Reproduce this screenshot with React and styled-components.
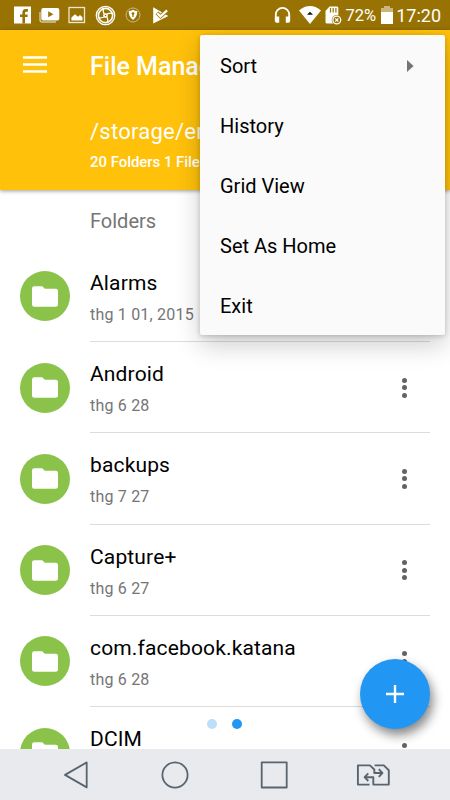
import React from "react";
import styled, { createGlobalStyle } from "styled-components";

const Global = createGlobalStyle`
  *, *::before, *::after { box-sizing: border-box; }
  body { margin: 0; font-family: Roboto, "Liberation Sans", sans-serif; background: #fff; }
  svg { display: block; flex: none; }
`;

const Screen = styled.div`
  position: relative;
  display: flex;
  flex-direction: column;
  width: 450px;
  height: 800px;
  overflow: hidden;
  background: #fff;
`;

const StatusBar = styled.div`
  display: flex;
  justify-content: space-between;
  height: 30px;
  padding: 0 9px 0 13px;
  flex: none;
  background: #987304;
  color: #fff;
`;

const StatusGroup = styled.div`
  display: flex;
  align-items: center;
  gap: ${(p) => p.$gap || 0}px;
`;

const StatusText = styled.span`
  font-size: ${(p) => p.$size}px;
  line-height: 30px;
  height: 30px;
  padding-top: 0.5px;
  margin: 0 ${(p) => p.$right || 0}px 0 ${(p) => p.$left}px;
`;

const Header = styled.header`
  position: relative;
  z-index: 1;
  display: flex;
  height: 160px;
  flex: none;
  padding: 25px 0 0 23px;
  background: #ffc10a;
  color: #fff;
  box-shadow: 0 1px 4px rgba(0, 0, 0, 0.4);
`;

const HeaderText = styled.div`
  display: flex;
  flex-direction: column;
  margin-left: 43px;
  white-space: nowrap;
`;

const AppTitle = styled.h1`
  margin: -3px 0 0;
  font-size: 25px;
  line-height: 30px;
  font-weight: 500;
`;

const Path = styled.div`
  margin-top: 36px;
  font-size: 22px;
  line-height: 28px;
  letter-spacing: 0.25px;
`;

const Counts = styled.div`
  margin-top: 6px;
  font-size: 15px;
  line-height: 20px;
  font-weight: 500;
  letter-spacing: -0.05px;
`;

const Content = styled.main`
  flex: 1;
  min-height: 0;
  overflow: hidden;
`;

const SectionTitle = styled.h2`
  margin: 0;
  height: 60.75px;
  padding: 18.5px 0 0 90px;
  font-size: 20px;
  line-height: 24px;
  font-weight: 400;
  color: #757575;
`;

const Row = styled.div`
  display: flex;
  height: 91.25px;
  padding-left: 20px;
`;

const Avatar = styled.div`
  display: flex;
  align-items: center;
  justify-content: center;
  width: 50px;
  height: 50px;
  margin-top: 20.5px;
  flex: none;
  border-radius: 50%;
  background: #8bc34a;
`;

const RowBody = styled.div`
  display: flex;
  justify-content: space-between;
  width: 340px;
  margin-left: 20px;
  border-bottom: 1px solid #dcdcdc;
`;

const FileName = styled.div`
  margin-top: 20px;
  font-size: 21px;
  line-height: 24px;
  letter-spacing: 0.15px;
  color: #000;
`;

const FileDate = styled.div`
  margin-top: 10px;
  font-size: 16px;
  line-height: 20px;
  letter-spacing: 0.2px;
  color: #757575;
`;

const MoreDots = styled.div`
  display: flex;
  flex-direction: column;
  gap: 2.5px;
  margin: 35.5px 22.7px 0 0;
`;

const Dot = styled.span`
  width: 5px;
  height: 5px;
  border-radius: 50%;
  background: #636363;
`;

const Menu = styled.div`
  position: absolute;
  z-index: 3;
  top: 35px;
  left: 200px;
  width: 245px;
  height: 300px;
  border-radius: 2px;
  background: #fafafa;
  box-shadow: 0 10px 26px rgba(0, 0, 0, 0.2), 0 1px 5px rgba(0, 0, 0, 0.2);
`;

const MenuItem = styled.div`
  display: flex;
  align-items: center;
  justify-content: space-between;
  height: 60px;
  padding: 1px 31px 0 20px;
  font-size: 20px;
  color: #000;
`;

const Pager = styled.div`
  position: absolute;
  z-index: 2;
  top: 719.3px;
  left: 207.4px;
  display: flex;
  gap: 15px;
`;

const PageDot = styled.span`
  width: 10px;
  height: 10px;
  border-radius: 50%;
  background: ${(p) => (p.$active ? "#2196f3" : "#bbdefb")};
`;

const Fab = styled.button`
  position: absolute;
  z-index: 2;
  top: 659.3px;
  left: 360px;
  display: flex;
  align-items: center;
  justify-content: center;
  width: 70px;
  height: 70px;
  padding: 0;
  border: 0;
  border-radius: 50%;
  background: #2196f3;
  box-shadow: 3px 6px 11px rgba(0, 0, 0, 0.48);
`;

const NavBar = styled.nav`
  position: relative;
  display: flex;
  align-items: center;
  height: 51px;
  flex: none;
  padding: 1px 0 0 62px;
  background: #e9eaed;
  color: #58656f;

  svg + svg { margin-left: 70px; }
  svg:last-child { margin-left: 67.5px; }
`;

const FacebookIcon = () => (
  <svg width="18" height="18" viewBox="0 0 18 18">
    <rect x="1" y="0.5" width="17" height="17" fill="#fff" />
    <path d="M12 17.5V11h2.6V8.5H12V7q0-1.3 1.4-1.3h1.5V3h-2.2Q9.4 3 9.4 6.5v2H7V11h2.4v6.5Z" fill="#987304" />
  </svg>
);

const VideoIcon = () => (
  <svg width="21" height="16" viewBox="0 0 21 16">
    <path d="M1 5v7.5Q1 15 3.5 15H17" fill="none" stroke="#d7c69b" strokeWidth="1.4" />
    <rect x="2.3" y="1" width="18" height="12.5" rx="2" fill="#fff" />
    <path d="m9.2 4.2 5.2 3-5.2 3Z" fill="#987304" />
  </svg>
);

const GalleryIcon = () => (
  <svg width="18" height="18" viewBox="0 0 18 18">
    <rect x="1" y="1.5" width="15.5" height="15" fill="none" stroke="#eee6d0" strokeWidth="1.3" />
    <path d="M3.4 14.4v-3L7 8.3l3 2.4L12 9l2.5 2.3v3.1Z" fill="#fff" />
  </svg>
);

const WheelIcon = () => (
  <svg width="23" height="21" viewBox="-1 0 23 21" fill="none" stroke="#fff">
    <circle cx="10.5" cy="10.5" r="9.2" strokeWidth="1.3" />
    <circle cx="10.5" cy="10.5" r="7.1" strokeWidth="1.6" />
    <path d="M10.5 10.5Q8 9 8.2 4M10.5 10.5Q12 8 17 8.2M10.5 10.5Q13 12 12.8 17M10.5 10.5Q9 13 4 12.8" strokeWidth="1.3" />
    <circle cx="10.5" cy="10.5" r="2.3" fill="#fff" stroke="none" />
    <circle cx="10.5" cy="10.5" r=".8" fill="#987304" stroke="none" />
  </svg>
);

const ShieldIcon = () => (
  <svg width="16" height="16" viewBox="0 0 16 16">
    <circle cx="8" cy="8" r="7" fill="none" stroke="#cbb781" strokeWidth="1" />
    <path d="M8 2.8q2 1.2 4.3 1.3 0 6-4.3 9-4.3-3-4.3-9Q6 4 8 2.8Z" fill="#fff" />
    <circle cx="8" cy="6.6" r="1.4" fill="#987304" />
    <path d="M8 7v3" stroke="#987304" strokeWidth="1.3" />
  </svg>
);

const PlayCheckIcon = () => (
  <svg width="20" height="17" viewBox="-4 0 20 17">
    <path d="M.2.2 15.3 9 .2 16.6Z" fill="#fff" />
    <path d="m4 5.8 3.5 3.5L14.6 3" fill="none" stroke="#987304" strokeWidth="4" />
    <path d="m4.2 6.2 3.3 3.2 6.6-6" fill="none" stroke="#fff" strokeWidth="2.2" />
  </svg>
);

const HeadphonesIcon = () => (
  <svg width="17" height="18" viewBox="0 0 17 18">
    <path d="M1.8 15V8.5a6.7 6.7 0 0 1 13.4 0V15" fill="none" stroke="#fff" strokeWidth="1.8" />
    <path d="M.9 10.5H5.2v6.3H2.6Q.9 16.8.9 15ZM11.8 10.5h4.3V15q0 1.8-1.7 1.8h-2.6Z" fill="#fff" />
  </svg>
);

const WifiIcon = () => (
  <svg width="22" height="18" viewBox="0 0 22 18">
    <path d="M0 4.4Q11-4.3 22 4.4L11 18Z" fill="#fff" />
    <path d="m8 8.8 3-3 3 3Z" fill="#111" />
  </svg>
);

const CardIcon = () => (
  <svg width="17" height="19" viewBox="0 0 17 19">
    <path d="M4.5.5H12Q13.3.5 13.3 2v15.5H2Q.5 17.5.5 16V5Z" fill="#fff" />
    <path d="M5.5 2v4.5M8.2 2v4.5M10.9 2v4.5" stroke="#987304" strokeWidth="1.2" />
    <circle cx="11.8" cy="14" r="5.1" fill="#987304" />
    <circle cx="11.8" cy="14" r="3.9" fill="none" stroke="#fff" strokeWidth="1.3" />
    <path d="m10.2 12.4 3.2 3.2m0-3.2-3.2 3.2" stroke="#fff" strokeWidth="1.3" />
  </svg>
);

const BatteryIcon = () => (
  <svg width="12" height="18" viewBox="0 0 12 18">
    <path d="M3 0h6v2h3v4H0V2h3Z" fill="#c9b67b" />
    <path d="M0 6h12v12H0Z" fill="#fff" />
  </svg>
);

const HamburgerIcon = () => (
  <svg width="24" height="19" viewBox="0 0 24 19">
    <path d="M0 2.5h24M0 9.5h24M0 16.5h24" stroke="#fff" strokeWidth="2.6" />
  </svg>
);

const FolderIcon = () => (
  <svg width="26" height="21" viewBox="0 0 26 21">
    <path d="M2.3.3h8L12.8 2.7h10.9Q26 2.7 26 5v13.4q0 2.3-2.3 2.3H2.3Q0 20.7 0 18.4V2.6Q0 .3 2.3.3Z" fill="#fff" />
  </svg>
);

const SubmenuArrow = () => (
  <svg width="7" height="12" viewBox="0 0 7 12">
    <path d="m0 0 6.6 6L0 12Z" fill="#757575" />
  </svg>
);

const PlusIcon = () => (
  <svg width="18" height="18" viewBox="0 0 18 18">
    <path d="M9 0v18M0 9h18" stroke="#fff" strokeWidth="2.4" />
  </svg>
);

const BackIcon = () => (
  <svg width="28" height="28" viewBox="0 0 28 28">
    <path d="M24.7 1.4v25L3 13.9Z" fill="none" stroke="currentColor" strokeWidth="1.8" strokeLinejoin="round" />
  </svg>
);

const HomeIcon = () => (
  <svg width="30" height="28" viewBox="0 0 30 28">
    <circle cx="15" cy="14" r="12.6" fill="none" stroke="currentColor" strokeWidth="1.8" />
  </svg>
);

const RecentsIcon = () => (
  <svg width="28" height="28" viewBox="0 0 28 28">
    <path d="M1.7 1.3h25v25.2h-25Z" fill="none" stroke="currentColor" strokeWidth="1.8" strokeLinejoin="round" />
  </svg>
);

const SimSwapIcon = () => (
  <svg width="34" height="24" viewBox="0 0 34 24" fill="none" stroke="currentColor" strokeWidth="1.9" strokeLinejoin="round">
    <path d="M13.6 21.6H1.9V2.4h12L18.3 6.5V10H26M22.8 6.2 26.4 10l-3.6 3.8" />
    <path d="M18.6 2.4h9.2l5 4.9v14.3H17.3v-7.4H9M12.3 10.4 8.6 14.2l3.7 3.8" />
  </svg>
);

const folders = [
  ["Alarms", "thg 1 01, 2015"],
  ["Android", "thg 6 28"],
  ["backups", "thg 7 27"],
  ["Capture+", "thg 6 27"],
  ["com.facebook.katana", "thg 6 28"],
  ["DCIM", ""],
];

const FolderRow = ({ name, date }) => (
  <Row>
    <Avatar><FolderIcon /></Avatar>
    <RowBody>
      <div>
        <FileName>{name}</FileName>
        {date && <FileDate>{date}</FileDate>}
      </div>
      <MoreDots><Dot /><Dot /><Dot /></MoreDots>
    </RowBody>
  </Row>
);

export default function App() {
  return (
    <Screen>
      <Global />
      <StatusBar>
        <StatusGroup $gap={8}>
          <FacebookIcon />
          <VideoIcon />
          <GalleryIcon />
          <WheelIcon />
          <ShieldIcon />
          <PlayCheckIcon />
        </StatusGroup>
        <StatusGroup>
          <StatusGroup $gap={4.5}>
            <StatusGroup $gap={8}>
              <HeadphonesIcon />
              <WifiIcon />
            </StatusGroup>
            <CardIcon />
          </StatusGroup>
          <StatusText $size={16.5} $left={3.5} $right={5}>72%</StatusText>
          <BatteryIcon />
          <StatusText $size={18} $left={3}>17:20</StatusText>
        </StatusGroup>
      </StatusBar>
      <Header>
        <HamburgerIcon />
        <HeaderText>
          <AppTitle>File Manager</AppTitle>
          <Path>/storage/emulated/0</Path>
          <Counts>20 Folders 1 File</Counts>
        </HeaderText>
      </Header>
      <Content>
        <SectionTitle>Folders</SectionTitle>
        {folders.map(([name, date]) => (
          <FolderRow key={name} name={name} date={date} />
        ))}
      </Content>
      <NavBar>
        <BackIcon />
        <HomeIcon />
        <RecentsIcon />
        <SimSwapIcon />
      </NavBar>
      <Pager>
        <PageDot />
        <PageDot $active />
      </Pager>
      <Fab aria-label="Add"><PlusIcon /></Fab>
      <Menu>
        <MenuItem>Sort <SubmenuArrow /></MenuItem>
        <MenuItem>History</MenuItem>
        <MenuItem>Grid View</MenuItem>
        <MenuItem>Set As Home</MenuItem>
        <MenuItem>Exit</MenuItem>
      </Menu>
    </Screen>
  );
}
